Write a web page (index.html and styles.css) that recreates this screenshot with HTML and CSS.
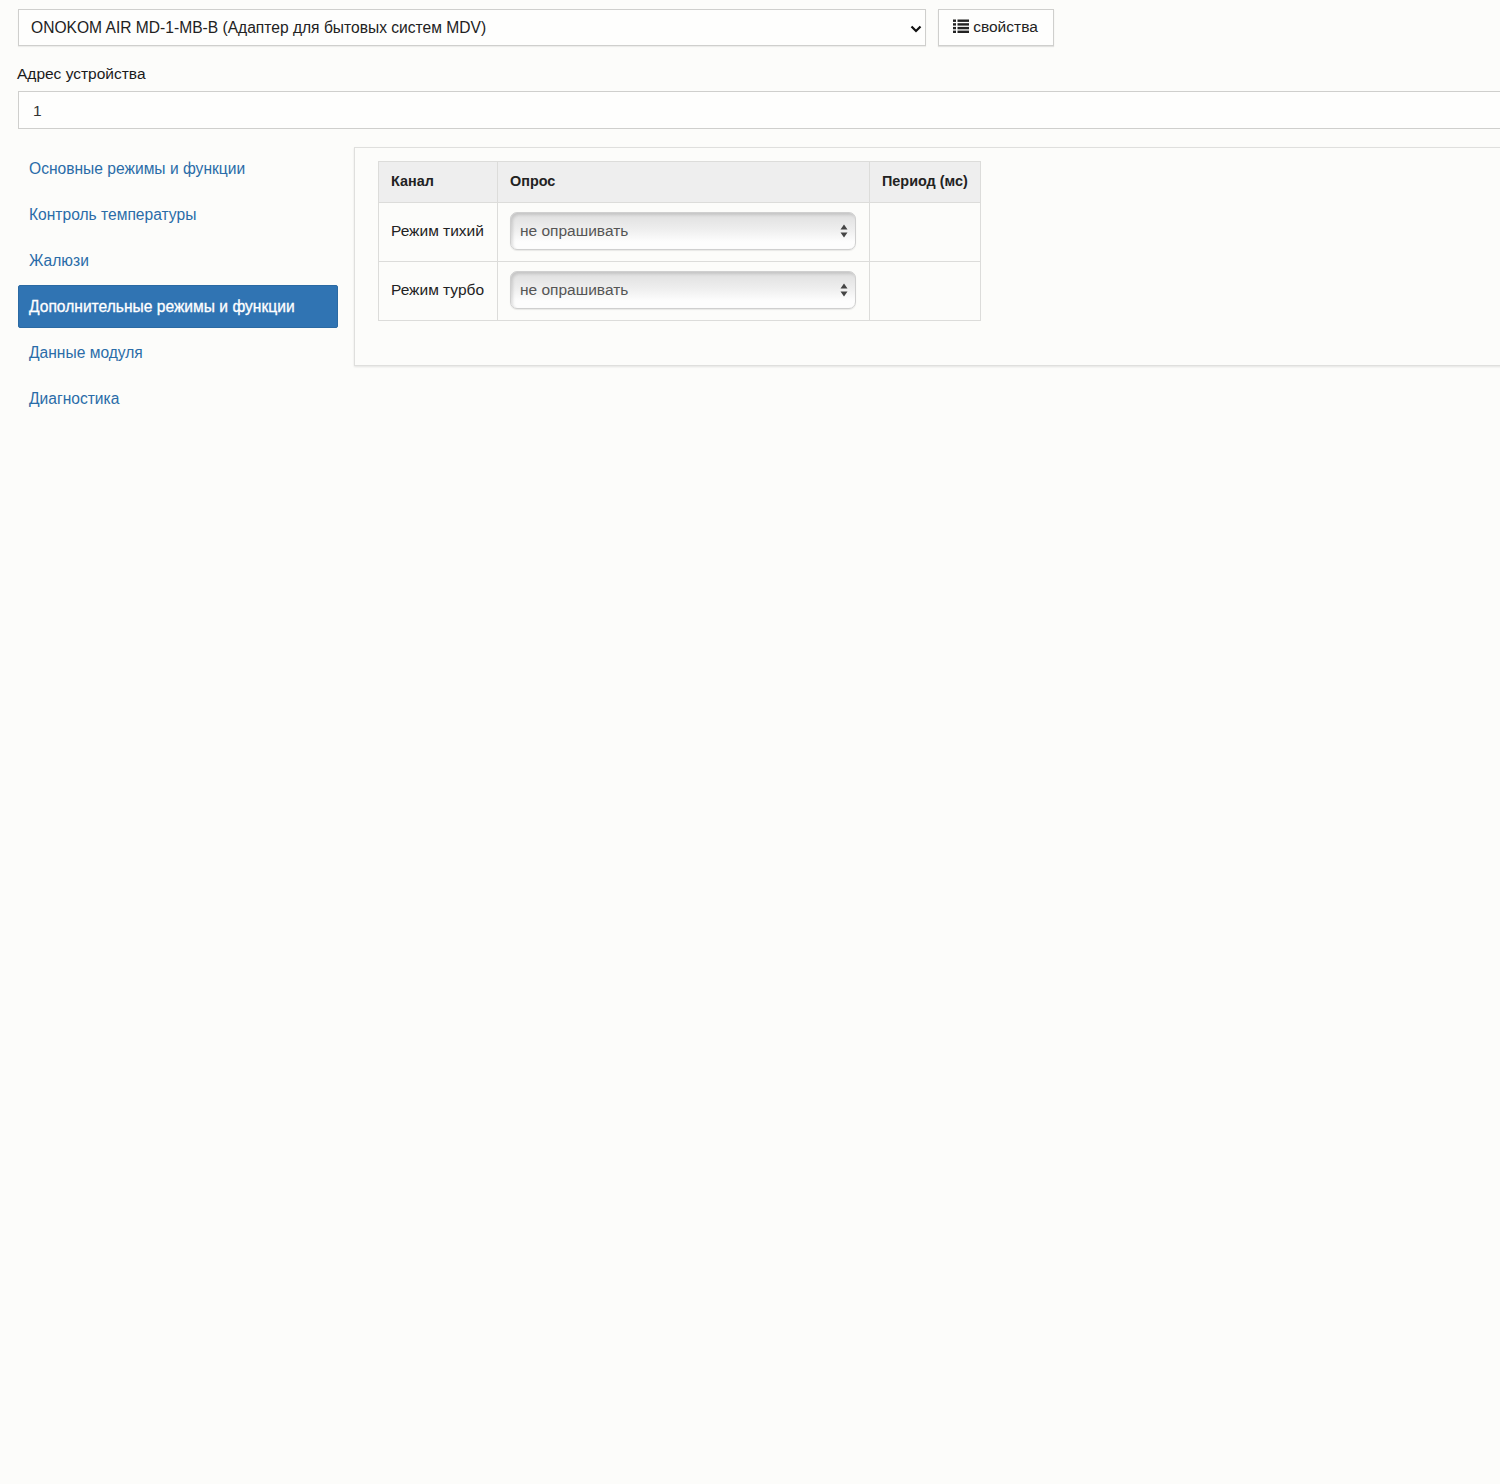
FILE: index.html
```html
<!DOCTYPE html>
<html lang="ru">
<head>
<meta charset="utf-8">
<title>Устройство</title>
<link rel="stylesheet" href="styles.css">
</head>
<body>
<div class="page">
  <div class="device-row">
    <div class="device-select">
      <span class="device-name">ONOKOM AIR MD-1-MB-B (Адаптер для бытовых систем MDV)</span>
      <svg class="chevron" width="12" height="8" viewBox="0 0 12 8"><path d="M1.5 1.5 6 6l4.5-4.5" fill="none" stroke="#111" stroke-width="2.2"/></svg>
    </div>
    <button class="props-btn" type="button">
      <svg class="list-icon" width="16" height="15" viewBox="0 0 16 15" fill="#222"><rect x="0" y="0.5" width="3" height="2.4"/><rect x="4.5" y="0.5" width="11.5" height="2.4"/><rect x="0" y="4.2" width="3" height="2.4"/><rect x="4.5" y="4.2" width="11.5" height="2.4"/><rect x="0" y="7.9" width="3" height="2.4"/><rect x="4.5" y="7.9" width="11.5" height="2.4"/><rect x="0" y="11.6" width="3" height="2.4"/><rect x="4.5" y="11.6" width="11.5" height="2.4"/></svg>
      <span class="props-text">свойства</span>
    </button>
  </div>
  <label class="addr-label">Адрес устройства</label>
  <div class="addr-input">1</div>
  <div class="main">
    <nav class="side">
      <a class="side-link">Основные режимы и функции</a>
      <a class="side-link">Контроль температуры</a>
      <a class="side-link">Жалюзи</a>
      <a class="side-link active">Дополнительные режимы и функции</a>
      <a class="side-link">Данные модуля</a>
      <a class="side-link">Диагностика</a>
    </nav>
    <section class="panel">
      <table class="grid">
        <thead>
          <tr><th class="c1">Канал</th><th class="c2">Опрос</th><th class="c3">Период (мс)</th></tr>
        </thead>
        <tbody>
          <tr>
            <td>Режим тихий</td>
            <td><div class="poll"><span>не опрашивать</span><svg width="8" height="14" viewBox="0 0 8 14" fill="#444"><path d="M4 0.5 7.5 5.5H.5zM4 13.5.5 8.5h7z"/></svg></div></td>
            <td></td>
          </tr>
          <tr>
            <td>Режим турбо</td>
            <td><div class="poll"><span>не опрашивать</span><svg width="8" height="14" viewBox="0 0 8 14" fill="#444"><path d="M4 0.5 7.5 5.5H.5zM4 13.5.5 8.5h7z"/></svg></div></td>
            <td></td>
          </tr>
        </tbody>
      </table>
    </section>
  </div>
</div>
</body>
</html>
```
FILE: styles.css
```css
* { box-sizing: border-box; }
html, body { margin: 0; height: 100%; }
body {
  background: #fcfcfa;
  color: #1a1a1a;
  font-family: "Liberation Sans", Arial, sans-serif;
  font-size: 16px;
  overflow: hidden;
}
.page { width: 1540px; height: 1484px; padding: 9px 0 0 18px; }
.device-row { display: flex; gap: 12px; align-items: flex-start; }
.device-select {
  width: 908px; height: 37px;
  display: flex; align-items: center; justify-content: space-between;
  padding: 0 3px 0 12px;
  background: #fefefd;
  border: 1px solid #cfcfcd;
  box-shadow: 0 1px 1px rgba(0,0,0,.06);
  color: #222;
  font-size: 15.6px;
}
.chevron { margin-top: 3px; }
.props-btn {
  width: 116px; height: 37px;
  display: flex; align-items: center; justify-content: center; gap: 4px;
  padding: 0 0 2px;
  background: #fefefd;
  border: 1px solid #cfcfcd;
  box-shadow: 0 1px 1px rgba(0,0,0,.1);
  font: 15.5px "Liberation Sans", Arial, sans-serif;
  color: #222;
}
.list-icon { margin-left: -1px; }
.addr-label { display: block; margin: 19px 0 0 -1px; line-height: 18px; font-size: 15.5px; color: #1a1a1a; }
.addr-input {
  margin-top: 8px;
  height: 38px;
  padding: 0 14px;
  line-height: 37px;
  background: #fefefd;
  border: 1px solid #cfcfcd;
  color: #333;
  font-size: 15.5px;
}
.main { display: flex; gap: 16px; align-items: flex-start; margin-top: 18px; }
.side { width: 320px; display: flex; flex-direction: column; gap: 3px; }
.side-link {
  display: block;
  height: 43px;
  padding: 0 11px;
  line-height: 43px;
  font-size: 15.6px;
  color: #2a6ca8;
  border-radius: 2px;
  white-space: nowrap;
}
.side-link.active { background: #3074b3; color: #fff; -webkit-text-stroke: .3px #fff; border: 1px solid #2b6aa3; line-height: 41px; padding: 0 10px; }
.panel {
  flex: 1;
  height: 219px;
  padding: 13px 23px;
  background: #fcfcfa;
  border: 1px solid #dfdfdd;
  box-shadow: 0 1px 2px rgba(0,0,0,.1);
}
.grid { border-collapse: collapse; table-layout: fixed; width: 602px; font-size: 15.5px; }
.grid th, .grid td { border: 1px solid #dcdcda; padding: 0 12px; text-align: left; }
.grid th { height: 41px; padding-bottom: 2px; background: #eeeeee; font-size: 14.4px; font-weight: 700; color: #222; white-space: nowrap; }
.grid td { height: 59px; padding-bottom: 2px; color: #222; white-space: nowrap; }
.c1 { width: 119px; }
.c2 { width: 372px; }
.c3 { width: 111px; }
.poll {
  width: 346px; height: 38px;
  display: flex; align-items: center; justify-content: space-between;
  padding: 0 7px 0 9px;
  border-radius: 7px;
  border: 1px solid #cfcfcf;
  background: linear-gradient(#dfdfdf, #eeeeee 45%, #fdfdfd 80%);
  box-shadow: inset 2px 2px 3px rgba(0,0,0,.12), 0 1px 1px rgba(0,0,0,.08);
  color: #555;
}
```
